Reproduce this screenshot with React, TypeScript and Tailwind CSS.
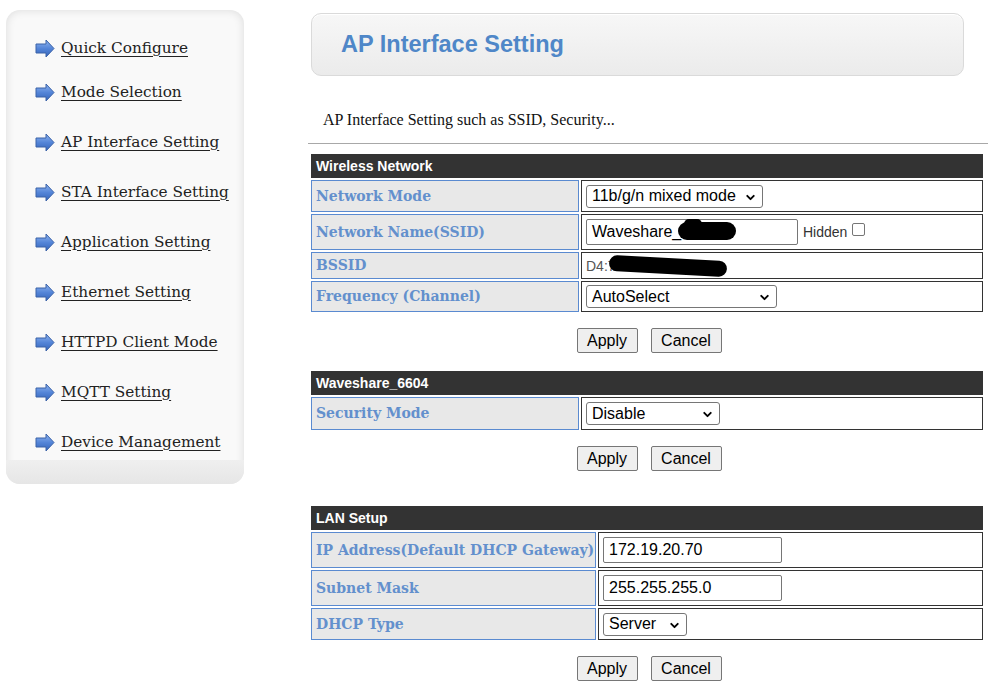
import { ChevronDown } from 'lucide-react';

const menu = [
  'Quick Configure',
  'Mode Selection',
  'AP Interface Setting',
  'STA Interface Setting',
  'Application Setting',
  'Ethernet Setting',
  'HTTPD Client Mode',
  'MQTT Setting',
  'Device Management',
];

function Arrow() {
  return (
    <svg width="20" height="19" viewBox="0 0 20 19" className="shrink-0">
      <defs>
        <linearGradient id="ag" x1="0" y1="0" x2="0" y2="1">
          <stop offset="0" stopColor="#8fb4ee" />
          <stop offset="0.5" stopColor="#5485d8" />
          <stop offset="1" stopColor="#3564b8" />
        </linearGradient>
      </defs>
      <path d="M1 5 H11 V1 L19 9.5 L11 18 V14 H1 Z" fill="url(#ag)" stroke="#3a62a8" strokeWidth="1" strokeLinejoin="round" />
    </svg>
  );
}

function Sidebar() {
  return (
    <div className="relative ml-[6px] mt-[10px] h-[474px] w-[238px] shrink-0 overflow-hidden rounded-[14px] bg-[#f9f9f9] shadow-[inset_0_0_10px_rgba(0,0,0,0.12)]">
      <div className="absolute inset-x-0 bottom-0 h-[24px] bg-gradient-to-b from-[#efefef] to-[#e6e6e6]" />
      <ul className="relative flex flex-col pl-[29px] pt-[27px] font-['DejaVu_Serif',serif] text-[15.3px] text-[#222]">
        {menu.map((m, i) => (
          <li key={m} className={`flex h-[22px] items-center gap-[6px] ${i === 0 ? '' : i === 1 ? 'mt-[22px]' : 'mt-[28px]'}`}>
            <Arrow />
            <a href="#" className="underline decoration-1 underline-offset-[3px]">{m}</a>
          </li>
        ))}
      </ul>
    </div>
  );
}

function Select({ value, w }: { value: string; w: string }) {
  return (
    <span className={`relative inline-flex h-[23px] items-center rounded-[3px] border border-[#767676] bg-white pl-[5px] text-[16px] text-black ${w}`}>
      {value}
      <ChevronDown className="absolute right-[5px] top-[5px]" size={13} strokeWidth={3.5} />
    </span>
  );
}

function Input({ value, w }: { value: string; w: string }) {
  return (
    <span className={`inline-flex h-[26px] items-center rounded-[2px] border border-[#767676] bg-white pl-[5px] text-[16px] text-black ${w}`}>
      {value}
    </span>
  );
}

function Header({ title }: { title: string }) {
  return (
    <tr>
      <td colSpan={2} className="h-[24px] bg-[#333] pl-[5px] font-['Liberation_Sans',Arial,sans-serif] text-[14px] font-bold text-white">
        {title}
      </td>
    </tr>
  );
}

function Row({ label, h, lw, children }: { label: string; h: string; lw: string; children: React.ReactNode }) {
  return (
    <tr className={h}>
      <td className={`whitespace-nowrap border border-[#5a8ad0] bg-[#e8e8e8] pl-[4px] font-['DejaVu_Serif',serif] text-[14px] font-bold text-[#6390cd] ${lw}`}>
        {label}
      </td>
      <td className="relative border border-[#333] pl-[4px] font-['Liberation_Sans',Arial,sans-serif]">{children}</td>
    </tr>
  );
}

function Buttons() {
  return (
    <div className="flex justify-center gap-[13px] pl-[2px] font-['Liberation_Sans',Arial,sans-serif] text-[16px] text-black">
      <button className="h-[25px] w-[61px] rounded-[2px] border border-[#767676] bg-[#efefef]">Apply</button>
      <button className="h-[25px] w-[71px] rounded-[2px] border border-[#767676] bg-[#efefef]">Cancel</button>
    </div>
  );
}

export default function App() {
  return (
    <div className="flex min-h-[699px] w-[994px] bg-white">
      <Sidebar />
      <div className="ml-[64px] flex w-[680px] flex-col">
        <div className="ml-[3px] mt-[13px] flex h-[63px] w-[653px] items-center rounded-[10px] border border-[#dadada] bg-gradient-to-b from-[#f7f7f7] to-[#ebebeb] pl-[29px] shadow-[inset_0_1px_0_#fff]">
          <h1 className="font-['Liberation_Sans',Arial,sans-serif] text-[23.5px] font-bold text-[#4f87c8]">AP Interface Setting</h1>
        </div>
        <p className="ml-[15px] mt-[32px] font-['Liberation_Serif',serif] text-[16px] text-[#111]">AP Interface Setting such as SSID, Security...</p>
        <hr className="mt-[11px] border-t border-[#a8a8a8]" />

        <table className="ml-[1px] mt-[8px] w-[676px] border-separate border-spacing-[2px]">
          <tbody>
            <Header title="Wireless Network" />
            <Row label="Network Mode" h="h-[32px]" lw="w-[268px]">
              <Select value="11b/g/n mixed mode" w="w-[177px]" />
            </Row>
            <Row label="Network Name(SSID)" h="h-[36px]" lw="w-[268px]">
              <div className="flex items-center">
                <span className="relative">
                  <Input value="Waveshare_" w="w-[212px]" />
                  <span className="absolute left-[92px] top-[3px] h-[18px] w-[58px] rounded-full bg-black" />
                  <span className="absolute left-[98px] top-[0px] h-[10px] w-[18px] rounded-full bg-black" />
                </span>
                <span className="ml-[5px] text-[14px] text-[#333]">Hidden</span>
                <span className="ml-[5px] mb-[6px] inline-block h-[13px] w-[13px] rounded-[2px] border border-[#767676] bg-white" />
              </div>
            </Row>
            <Row label="BSSID" h="h-[27px]" lw="w-[268px]">
              <span className="text-[14px] text-[#555]">D4:7</span>
              <span className="absolute left-[27px] top-[5px] h-[16px] w-[118px] rotate-[3deg] rounded-full bg-black" />
            </Row>
            <Row label="Frequency (Channel)" h="h-[31px]" lw="w-[268px]">
              <Select value="AutoSelect" w="w-[191px]" />
            </Row>
          </tbody>
        </table>
        <div className="mt-[14px]"><Buttons /></div>

        <table className="ml-[1px] mt-[16px] w-[676px] border-separate border-spacing-[2px]">
          <tbody>
            <Header title="Waveshare_6604" />
            <Row label="Security Mode" h="h-[33px]" lw="w-[268px]">
              <Select value="Disable" w="w-[134px]" />
            </Row>
          </tbody>
        </table>
        <div className="mt-[14px]"><Buttons /></div>

        <table className="ml-[1px] mt-[33px] w-[676px] border-separate border-spacing-[2px]">
          <tbody>
            <Header title="LAN Setup" />
            <Row label="IP Address(Default DHCP Gateway)" h="h-[36px]" lw="w-[285px]">
              <Input value="172.19.20.70" w="w-[179px]" />
            </Row>
            <Row label="Subnet Mask" h="h-[36px]" lw="w-[285px]">
              <Input value="255.255.255.0" w="w-[179px]" />
            </Row>
            <Row label="DHCP Type" h="h-[32px]" lw="w-[285px]">
              <Select value="Server" w="w-[84px]" />
            </Row>
          </tbody>
        </table>
        <div className="mt-[14px]"><Buttons /></div>
      </div>
    </div>
  );
}
